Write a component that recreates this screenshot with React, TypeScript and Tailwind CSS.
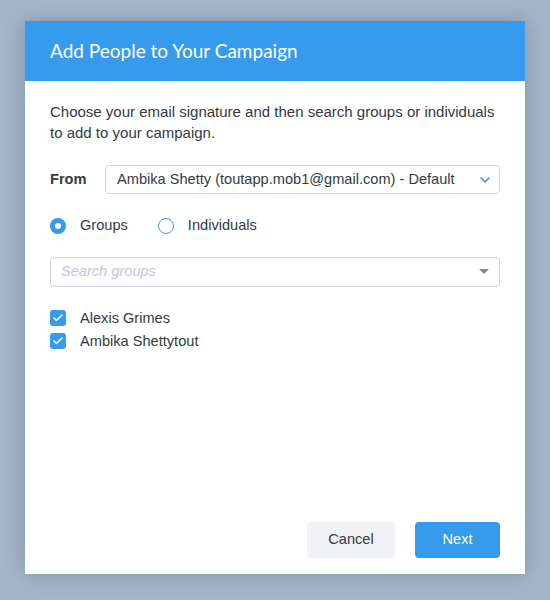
import { Check, ChevronDown } from 'lucide-react';

const people = ['Alexis Grimes', 'Ambika Shettytout'];

export default function App() {
  return (
    <div className="min-h-[600px] w-[550px] bg-[#a5b5c7] pt-[21px] font-['Liberation_Sans',Arial,sans-serif]">
      <div className="mx-auto flex h-[553px] w-[500px] flex-col bg-white shadow-[0_0_18px_rgba(60,80,100,0.35)]">
        {/* Header */}
        <div className="flex h-[60px] items-center bg-[#379bed] px-[25px]">
          <h1 className="font-['Lato',sans-serif] text-[19px] text-white">Add People to Your Campaign</h1>
        </div>

        {/* Body */}
        <div className="flex flex-1 flex-col px-[25px] pt-[20px] text-[#333a44]">
          <p className="text-[15px] leading-[21px]">
            Choose your email signature and then search groups or individuals to add to your campaign.
          </p>

          <div className="mt-[22px] flex items-center">
            <span className="w-[55px] text-[14.6px] font-bold">From</span>
            <div className="flex h-[29px] flex-1 items-center justify-between rounded border border-[#cfd4dc] pl-[11px] pr-[6px]">
              <span className="text-[14.6px]">Ambika Shetty (toutapp.mob1@gmail.com) - Default</span>
              <ChevronDown className="h-4 w-4 text-[#379bed]" strokeWidth={2.5} />
            </div>
          </div>

          <div className="mt-[21px] flex items-center text-[14.6px]">
            <span className="flex h-4 w-4 items-center justify-center rounded-full bg-[#379bed]">
              <span className="h-[6px] w-[6px] rounded-full bg-white" />
            </span>
            <span className="ml-[14px]">Groups</span>
            <span className="ml-[30px] h-4 w-4 rounded-full border border-[#379bed]" />
            <span className="ml-[14px]">Individuals</span>
          </div>

          <div className="mt-[20px] flex h-[30px] items-center justify-between rounded border border-[#cfd4dc] pl-[10px] pr-[10px]">
            <span className="text-[14.6px] italic text-[#c3c9d2]">Search groups</span>
            <span className="h-0 w-0 border-x-[5px] border-t-[5px] border-x-transparent border-t-[#888]" />
          </div>

          <div className="mt-[20px] flex flex-col">
            {people.map((p) => (
              <div key={p} className="flex items-center text-[14.6px] leading-[23px]">
                <span className="flex h-4 w-4 items-center justify-center rounded-[3px] bg-[#379bed]">
                  <Check className="h-3 w-3 text-white" strokeWidth={3} />
                </span>
                <span className="ml-[14px]">{p}</span>
              </div>
            ))}
          </div>

          <div className="mt-auto flex justify-end gap-[20px] pb-[16px]">
            <button className="h-[36px] w-[88px] rounded-[4px] bg-[#f0f2f6] text-[14.6px] text-[#333a44]">Cancel</button>
            <button className="h-[36px] w-[85px] rounded-[4px] bg-[#379bed] text-[14.6px] text-white">Next</button>
          </div>
        </div>
      </div>
    </div>
  );
}
